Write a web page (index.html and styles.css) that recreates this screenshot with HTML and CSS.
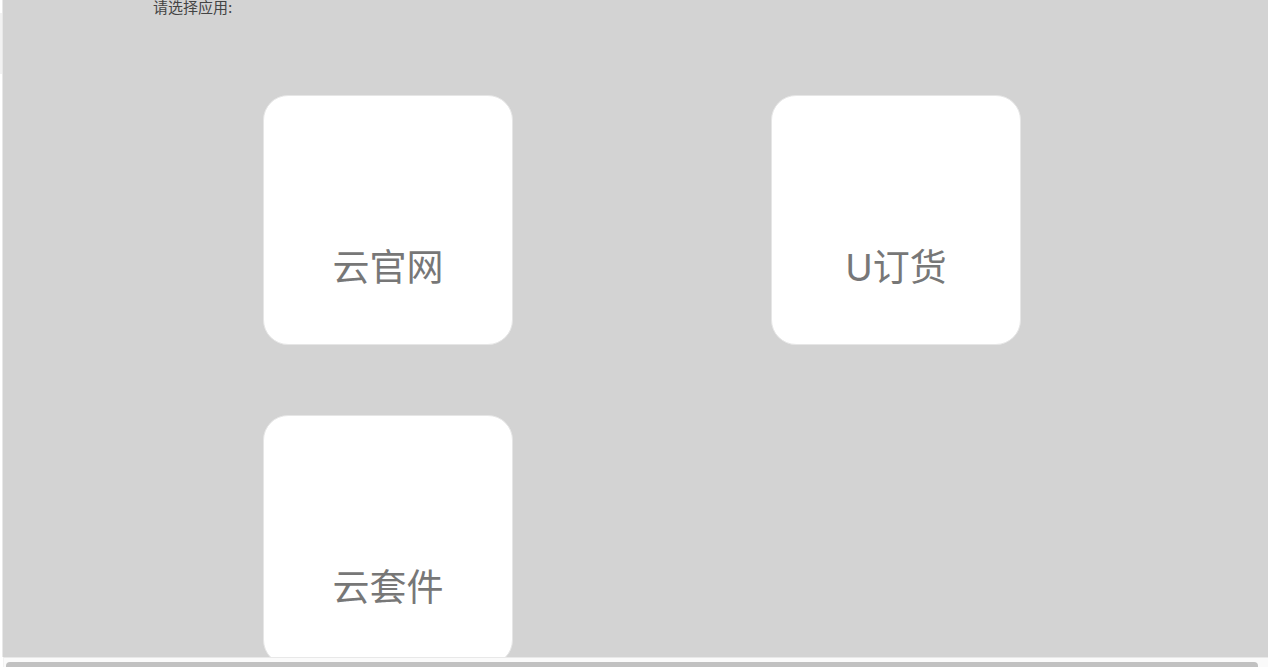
FILE: index.html
```html
<!DOCTYPE html>
<html lang="zh-CN">
<head>
<meta charset="utf-8">
<title>请选择应用</title>
<link rel="stylesheet" href="styles.css">
</head>
<body>
<div class="page">
  <div class="edge"><div class="edge-item"></div></div>
  <main class="panel">
    <h1 class="title">请选择应用:</h1>
    <div class="apps">
      <button class="app" type="button">云官网</button>
      <button class="app" type="button">U订货</button>
      <button class="app" type="button">云套件</button>
    </div>
  </main>
  <div class="scrollbar"><div class="thumb"></div></div>
</div>
</body>
</html>
```
FILE: styles.css
```css
* { box-sizing: border-box; }
body {
  margin: 0;
  font-family: Inter, "Noto Sans CJK SC", sans-serif;
}
.page {
  display: grid;
  grid-template-columns: 3px 1fr;
  grid-template-rows: 1fr 10px;
  height: 100vh;
  overflow: hidden;
  background: #fff;
}
.edge {
  padding-top: 13px;
  border-right: 1px solid #e8e8e8;
}
.edge-item {
  height: 61px;
  background: #f2f2f2;
}
.panel {
  min-height: 0;
  overflow: hidden;
  background: #d3d3d3;
}
.title {
  margin: 0 0 79px 150px;
  font-size: 15px;
  line-height: 16px;
  font-weight: 400;
  color: #444;
}
.apps {
  display: grid;
  grid-template-columns: 1fr 1fr;
  row-gap: 70px;
  padding: 0 118px 0 131px;
  justify-items: center;
}
.app {
  width: 250px;
  height: 250px;
  padding: 95px 0 0;
  border: 1px solid #e6e6e6;
  border-radius: 25px;
  background: #fff;
  color: #777;
  font: inherit;
  font-size: 37px;
  line-height: 56px;
}
.scrollbar {
  grid-column: 2;
  padding: 4px 10px 0 2px;
  border-top: 1px solid #e8e8e8;
  border-left: 1px solid #f2f2f2;
  background: #fafafa;
}
.thumb {
  height: 8px;
  border-radius: 4px;
  background: #c1c1c1;
}
```
